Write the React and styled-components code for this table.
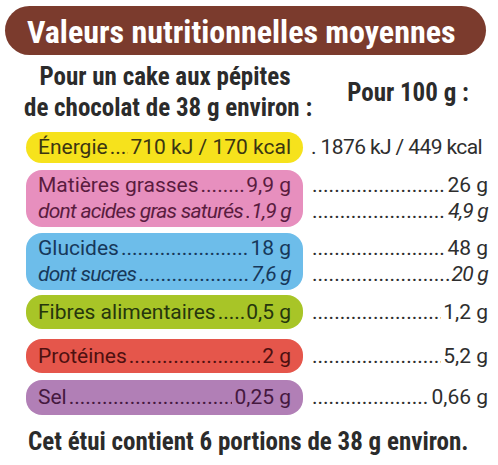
import React from "react";
import styled, { createGlobalStyle } from "styled-components";

const GlobalStyle = createGlobalStyle`
  body {
    margin: 0;
    background: #ffffff;
    font-family: "Roboto", "Open Sans", sans-serif;
    font-stretch: 75%;
  }
`;

const Page = styled.div`
  width: 498px;
  height: 465px;
  overflow: hidden;
  background: #fff;
  display: flex;
  flex-direction: column;
`;

const Banner = styled.div`
  margin: 6px 12px 0 5px;
  height: 49px;
  border-radius: 25px;
  background: #7b3b2d;
  display: flex;
  align-items: center;
  padding: 2px 0 0 22px;
  box-sizing: border-box;
  color: #fff;
  font-weight: bold;
  font-size: 32px;
`;

const Intro = styled.div`
  display: grid;
  grid-template-columns: 282px 1fr;
  margin: 6px 0 0 24px;
  color: #2b2b2b;
  font-weight: bold;
  font-size: 25px;
`;

const IntroLeft = styled.div`
  text-align: center;
  line-height: 31px;
  white-space: nowrap;
`;

const IntroRight = styled.div`
  display: flex;
  align-items: center;
  justify-content: center;
  padding-left: 12px;
  white-space: nowrap;
`;

const Rows = styled.div`
  display: flex;
  flex-direction: column;
  margin: 9px 10px 0 26px;
`;

const Row = styled.div`
  display: grid;
  grid-template-columns: 277px minmax(0, 1fr);
  column-gap: 7px;
  margin-top: ${(p) => p.$gap}px;
`;

const Pill = styled.div`
  background: ${(p) => p.$bg};
  color: ${(p) => p.$fg};
  border-radius: 16px;
  padding: 3px 12px;
  display: flex;
  flex-direction: column;
  justify-content: center;
`;

const Values = styled.div`
  display: flex;
  flex-direction: column;
  justify-content: center;
  color: #2e2e2e;
  padding: 3px 0;
`;

const Line = styled.div`
  display: flex;
  align-items: baseline;
  white-space: nowrap;
  font-size: 21px;
  font-weight: 400;
  font-stretch: 90%;
  letter-spacing: ${(p) => (p.$italic ? "-0.75px" : "0")};
  line-height: ${(p) => p.$lh || 25.5}px;
  font-style: ${(p) => (p.$italic ? "italic" : "normal")};
`;

const Leader = styled.span`
  flex: 1 1 0;
  overflow: hidden;
  min-width: 0;
  margin: 0 2px;
  font-style: normal;
  letter-spacing: 0;
  &::after {
    content: "................................................................................";
  }
`;

const Amount = styled.span`
  flex-shrink: 0;
`;

const Plain = styled.span`
  padding-left: 1px;
  letter-spacing: -0.6px;
`;

const Footer = styled.div`
  margin: 12px 0 0 28px;
  font-size: 25px;
  font-weight: bold;
  color: #2b2b2b;
  white-space: nowrap;
`;

const rows = [
  {
    bg: "#f6e21c",
    fg: "#3b3612",
    gap: 0,
    lh: 25,
    plain: true,
    lines: [{ label: "Énergie", value: "710 kJ / 170 kcal", per100: ". 1876 kJ / 449 kcal" }],
  },
  {
    bg: "#e78fbe",
    fg: "#5a1c3f",
    gap: 7,
    lines: [
      { label: "Matières grasses", value: "9,9 g", per100: "26 g" },
      { label: "dont acides gras saturés", value: "1,9 g", per100: "4,9 g", italic: true },
    ],
  },
  {
    bg: "#6dbdea",
    fg: "#17385a",
    gap: 6,
    lines: [
      { label: "Glucides", value: "18 g", per100: "48 g" },
      { label: "dont sucres", value: "7,6 g", per100: "20 g", italic: true },
    ],
  },
  {
    bg: "#a8c527",
    fg: "#26360d",
    gap: 5,
    lh: 28,
    lines: [{ label: "Fibres alimentaires", value: "0,5 g", per100: "1,2 g" }],
  },
  {
    bg: "#e5564b",
    fg: "#4e1010",
    gap: 10,
    lh: 28,
    lines: [{ label: "Protéines", value: "2 g", per100: "5,2 g" }],
  },
  {
    bg: "#b17fb6",
    fg: "#45183f",
    gap: 7,
    lh: 29,
    lines: [{ label: "Sel", value: "0,25 g", per100: "0,66 g" }],
  },
];

export default function App() {
  return (
    <Page>
      <GlobalStyle />
      <Banner>Valeurs nutritionnelles moyennes</Banner>
      <Intro>
        <IntroLeft>
          Pour un cake aux pépites
          <br />
          de chocolat de 38 g environ :
        </IntroLeft>
        <IntroRight>Pour 100 g :</IntroRight>
      </Intro>
      <Rows>
        {rows.map((row, i) => (
          <Row key={i} $gap={row.gap}>
            <Pill $bg={row.bg} $fg={row.fg}>
              {row.lines.map((l) => (
                <Line key={l.label} $italic={l.italic} $lh={row.lh}>
                  <Amount>{l.label}</Amount>
                  <Leader />
                  <Amount>{l.value}</Amount>
                </Line>
              ))}
            </Pill>
            <Values>
              {row.lines.map((l) => (
                <Line key={l.label} $italic={l.italic} $lh={row.lh}>
                  {row.plain ? (
                    <Plain>{l.per100}</Plain>
                  ) : (
                    <>
                      <Leader />
                      <Amount>{l.per100}</Amount>
                    </>
                  )}
                </Line>
              ))}
            </Values>
          </Row>
        ))}
      </Rows>
      <Footer>Cet étui contient 6 portions de 38 g environ.</Footer>
    </Page>
  );
}
